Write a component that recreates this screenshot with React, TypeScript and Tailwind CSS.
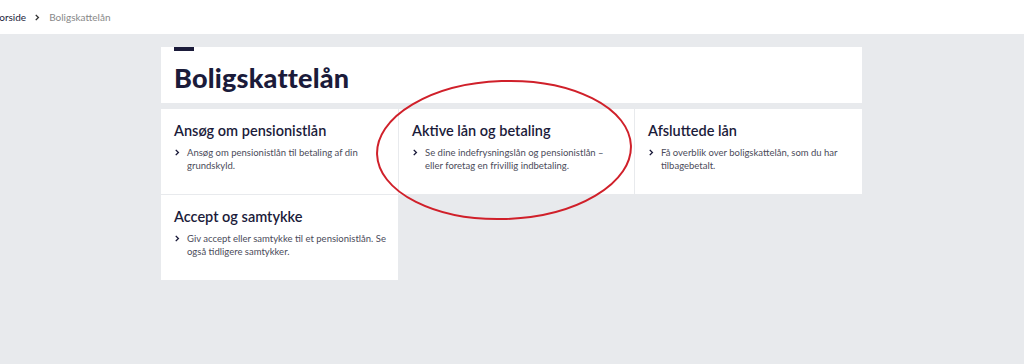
const cards = [
  {
    title: "Ansøg om pensionistlån",
    text: "Ansøg om pensionistlån til betaling af din grundskyld.",
  },
  {
    title: "Aktive lån og betaling",
    text: "Se dine indefrysningslån og pensionistlån –\neller foretag en frivillig indbetaling.",
  },
  {
    title: "Afsluttede lån",
    text: "Få overblik over boligskattelån, som du har tilbagebetalt.",
  },
  {
    title: "Accept og samtykke",
    text: "Giv accept eller samtykke til et pensionistlån. Se også tidligere samtykker.",
  },
];

function Chevron() {
  return (
    <svg viewBox="0 0 8 8" className="mt-[3px] h-[7px] w-[7px] shrink-0" fill="none">
      <path d="M2 1l3 3-3 3" stroke="#1b1b3a" strokeWidth="1.6" />
    </svg>
  );
}

function Card({ title, text }: { title: string; text: string }) {
  return (
    <div className="min-h-[85px] bg-white pl-[13px] pr-[8px] pt-[12px] pb-[14px]">
      <h2 className="text-[14.5px] font-semibold leading-[20px] text-[#1b1b3a]">{title}</h2>
      <div className="mt-[5px] flex gap-[6px] text-[9.5px] leading-[13px] text-[#4b4b5a]">
        <Chevron />
        <p className="max-w-[200px] whitespace-pre-line">{text}</p>
      </div>
    </div>
  );
}

export default function App() {
  return (
    <div className="relative h-[364px] w-[1024px] overflow-hidden bg-[#e8eaed] font-['Lato',sans-serif]">
      {/* Breadcrumb */}
      <div className="flex h-[34px] items-center bg-white text-[10px]">
        <div className="ml-[-6px] flex items-center gap-[8px]">
          <span className="text-[#1b1b3a]">Forside</span>
          <svg viewBox="0 0 8 8" className="h-[7px] w-[7px]" fill="none">
            <path d="M2 1l3 3-3 3" stroke="#333" strokeWidth="1.6" />
          </svg>
          <span className="text-[#888]">Boligskattelån</span>
        </div>
      </div>

      <div className="ml-[161px] mt-[13px] w-[701px]">
        {/* Header */}
        <div className="h-[56px] bg-white px-[13px]">
          <div className="h-[4px] w-[20px] bg-[#1b1b3a]" />
          <h1 className="mt-[12px] text-[27px] font-black leading-[30px] tracking-[0.2px] text-[#1b1b3a]">Boligskattelån</h1>
        </div>

        {/* Cards */}
        <div className="mt-[6px] grid grid-cols-[237px_235px_227px] gap-px">
          {cards.map((c) => (
            <Card key={c.title} title={c.title} text={c.text} />
          ))}
        </div>
      </div>

      {/* Annotation */}
      <svg className="pointer-events-none absolute left-0 top-0" width="1024" height="364">
        <ellipse cx="504" cy="150" rx="127" ry="69" fill="none" stroke="#d0202a" strokeWidth="2" transform="rotate(-2 504 150)" />
      </svg>
    </div>
  );
}
